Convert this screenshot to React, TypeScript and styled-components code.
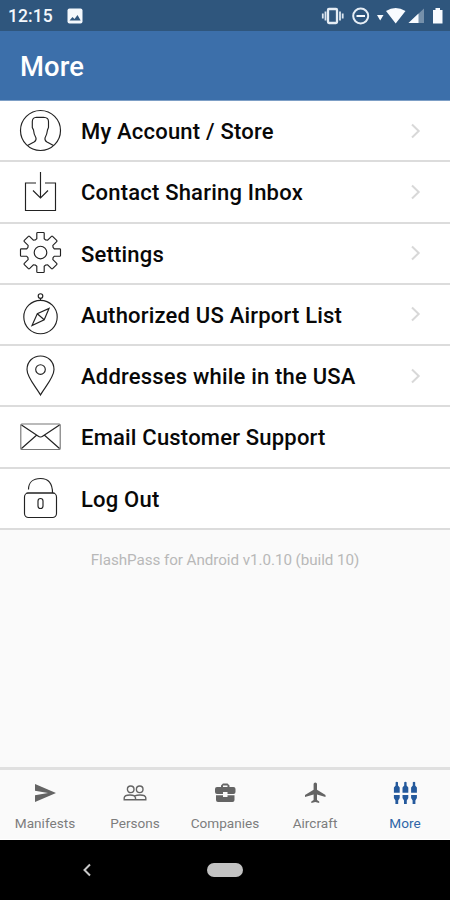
import React from "react";
import styled, { createGlobalStyle } from "styled-components";

const GlobalStyle = createGlobalStyle`
  body { margin: 0; background: #000; }
  * { box-sizing: border-box; }
`;

const Screen = styled.div`
  width: 450px;
  height: 900px;
  display: flex;
  flex-direction: column;
  overflow: hidden;
  background: #fafafa;
  font-family: Roboto, "Liberation Sans", sans-serif;
`;

const StatusBar = styled.header`
  height: 31px;
  flex: none;
  display: flex;
  align-items: center;
  padding: 1px 6px 0 8px;
  background: #2f567d;
  color: #f4f8fc;
`;

const Clock = styled.span`
  width: 59px;
  font-size: 17.5px;
  font-weight: 500;
  letter-spacing: 0.05px;
`;

const StatusIcons = styled.svg`
  margin-left: auto;
  display: block;
`;

const TitleBar = styled.div`
  height: 70px;
  flex: none;
  display: flex;
  align-items: center;
  padding: 2px 20px 0;
  background: #3c6faa;
  border-bottom: 1px solid #7d9fc6;
`;

const Title = styled.h1`
  margin: 0;
  color: #fff;
  font-size: 27.4px;
  font-weight: 500;
  letter-spacing: 0.1px;
`;

const List = styled.ul`
  margin: 0;
  padding: 0;
  list-style: none;
  background: #fff;
`;

const Row = styled.li`
  height: 61.25px;
  display: flex;
  align-items: center;
  padding: 0 28px 0 19px;
  border-bottom: 2px solid #dcdcdc;
`;

const RowIcon = styled.svg`
  width: 44px;
  height: 44px;
  flex: none;
  margin-right: 18px;
  fill: none;
  stroke: #222;
  stroke-width: 1.15;
`;

const RowLabel = styled.span`
  flex: 1;
  padding-top: 2px;
  color: #080808;
  font-size: 22px;
  font-weight: 500;
  letter-spacing: 0.2px;
  white-space: nowrap;
`;

const Chevron = styled.svg`
  width: 12px;
  height: 18px;
  fill: none;
  stroke: #d8d8d8;
  stroke-width: 2;
`;

const Version = styled.p`
  flex: 1;
  margin: 0;
  padding-top: 20.5px;
  color: #b8b8b8;
  font-size: 15.2px;
  line-height: 20px;
  letter-spacing: -0.05px;
  text-align: center;
`;

const TabBar = styled.nav`
  height: 73px;
  flex: none;
  display: grid;
  grid-template-columns: repeat(5, 1fr);
  border-top: 3px solid #e0e0e0;
  border-bottom: 1px solid #fff;
  background: #fafafa;
`;

const Tab = styled.div<{ $active?: boolean }>`
  display: flex;
  flex-direction: column;
  align-items: center;
  padding-top: 10px;
  color: ${(p) => (p.$active ? "#24599c" : "#646464")};
`;

const TabIcon = styled.svg`
  width: 26px;
  height: 26px;
  fill: currentColor;
`;

const TabLabel = styled.span<{ $active?: boolean }>`
  margin-top: 7.5px;
  color: ${(p) => (p.$active ? "#2f66a8" : "#7d7d7d")};
  font-size: 13.6px;
  line-height: 18px;
`;

const SystemNav = styled.footer`
  height: 60px;
  flex: none;
  display: flex;
  align-items: center;
  padding-left: 82px;
  background: #000;
`;

const BackIcon = styled.svg`
  width: 10px;
  height: 14px;
  fill: none;
  stroke: #c8c8c8;
  stroke-width: 2;
`;

const HomePill = styled.span`
  width: 36px;
  height: 14px;
  margin-left: 115px;
  border-radius: 7px;
  background: #c2c2c2;
`;

/* Eight straight-sided teeth around a round body. */
const gearPath = (() => {
  const point = (x: number, y: number, deg: number) => {
    const a = (deg * Math.PI) / 180;
    const px = 21.5 + x * Math.cos(a) - y * Math.sin(a);
    const py = 21.5 + x * Math.sin(a) + y * Math.cos(a);
    return `${px.toFixed(2)} ${py.toFixed(2)}`;
  };
  let d = "";
  for (let i = 0; i < 8; i++) {
    const a = i * 45;
    d += `${i ? "L" : "M"}${point(-5.1, -12.6, a)}L${point(-3.7, -13.8, a)}L${point(-3.7, -19.2, a)}Q${point(-3.7, -20, a)} ${point(-2.9, -20, a)}`;
    d += `L${point(2.9, -20, a)}Q${point(3.7, -20, a)} ${point(3.7, -19.2, a)}L${point(3.7, -13.8, a)}L${point(5.1, -12.6, a)}`;
  }
  return d + "Z";
})();

const rows = [
  {
    label: "My Account / Store",
    arrow: true,
    icon: (
      <>
        <circle cx="21.5" cy="21.5" r="20" />
        <path d="M8.500 36.500L15 33Q17.500 31.500 17 29Q14.800 25.500 14.500 21L13.300 18.500V12.500Q13.500 8.500 17.500 8.300H24.500Q29.500 8.500 29.500 12.500V18.500L28.500 21Q28 25.500 26 29Q25.500 31.500 28 33L34.500 36.500" />
      </>
    ),
  },
  {
    label: "Contact Sharing Inbox",
    arrow: true,
    icon: <path d="M17 13H6.500V40.500H36.500V13H26M21.500 2V27.500M14 20.500L21.500 28L29 20.500" />,
  },
  {
    label: "Settings",
    arrow: true,
    icon: (
      <>
        <path d={gearPath} />
        <circle cx="21.500" cy="21.500" r="6.300" />
      </>
    ),
  },
  {
    label: "Authorized US Airport List",
    arrow: true,
    icon: (
      <>
        <circle cx="21.500" cy="25" r="16.700" />
        <circle cx="21.500" cy="4" r="2.300" />
        <path d="M21.500 6.300V8.300M30 16.500L25.200 27.800L13 33.500L18.300 21.800ZM18.300 21.800L25.200 27.800" />
      </>
    ),
  },
  {
    label: "Addresses while in the USA",
    arrow: true,
    icon: (
      <>
        <path d="M21.500 41C17 33 8 23.500 8 15.500C8 7.500 14 2 21.500 2S35 7.500 35 15.500C35 23.500 26 33 21.500 41Z" />
        <circle cx="21.500" cy="15.500" r="4.800" />
      </>
    ),
  },
  {
    label: "Email Customer Support",
    arrow: false,
    icon: (
      <>
        <rect x="1.800" y="9" width="39.400" height="25.500" rx="1" stroke="#777" />
        <path d="M2.500 10L19 21Q21.500 23 24 21L40.500 10M2.500 33.500L17.500 20.300M40.500 33.500L25.500 20.300" />
      </>
    ),
  },
  {
    label: "Log Out",
    arrow: false,
    icon: (
      <>
        <rect x="5.500" y="17" width="32" height="24.500" rx="4" />
        <path d="M9.500 13.500C9.500 6.500 14 2.500 21.500 2.500S33.500 7.500 33.500 17M7.500 17H35.500" />
        <rect x="19" y="22.500" width="5" height="10" rx="2.500" />
      </>
    ),
  },
];

const tabs = [
  { label: "Manifests", icon: <path d="M3 4L24 13L3 22V15.200L16 13L3 10.800Z" /> },
  {
    label: "Persons",
    icon: (
      <g fill="none" stroke="currentColor" strokeWidth="1.400">
        <circle cx="8.700" cy="9.300" r="3.300" />
        <circle cx="17.700" cy="9.300" r="3.300" />
        <path d="M2.200 19.800V17.800Q2.500 15 8 15Q13 15 13.500 17.800V19.800ZM12.500 15.800Q15 15 18 15Q23.500 15 23.800 17.800V19.800H13.500" />
      </g>
    ),
  },
  {
    label: "Companies",
    icon: (
      <path
        fillRule="evenodd"
        d="M9 7V5.500L11 3.500H15.500L17.500 5.500V7H21.500Q23.500 7 23.500 9V12Q23.500 14 21.500 14H15.500V12H11V14H5Q3 14 3 12V9Q3 7 5 7ZM11 7H15.500V5.500H11ZM4 15.300H11V17H15.500V15.300H22.500V20Q22.500 22 20.500 22H6Q4 22 4 20Z"
      />
    ),
  },
  {
    label: "Aircraft",
    icon: <path d="M23.500 17V15L15 9.700V4Q15 2.500 13.300 2.500T11.600 4V9.700L3 15V17L11.600 14.400V20L9.300 21.600V23L13.300 22L17.200 23V21.600L15 20V14.400Z" />,
  },
  {
    label: "More",
    active: true,
    icon: (
      <>
        {[4.8, 13.4, 22].map((x) => (
          <path
            key={x}
            d={`M${x - 1.2} 2.300Q${x} 1.300 ${x + 1.2} 2.300V5.500L${x + 2.900} 7.500V12.700H${x - 2.900}V7.500L${x - 1.2} 5.500ZM${x - 2.900} 15H${x + 2.900}V18L${x + 1.400} 20.500V24H${x - 1.400}V20.500L${x - 2.900} 18Z`}
          />
        ))}
      </>
    ),
  },
];

export default function App() {
  return (
    <Screen>
      <GlobalStyle />
      <StatusBar>
        <Clock>12:15</Clock>
        <svg width="16" height="16" viewBox="0 0 16 16">
          <rect x=".5" y=".5" width="15" height="15" rx="2" fill="#f4f8fc" />
          <path d="M2.500 12.500L5.500 9L7.500 11L10.500 7L13.700 12.500Z" fill="#2f567d" />
        </svg>
        <StatusIcons width="124" height="20" viewBox="320 5.5 124 20" fill="#f8fbff">
          <rect x="328" y="8.500" width="9" height="14" rx="1" fill="none" stroke="#e5edf5" strokeWidth="2.300" />
          <path d="M325.500 11V20M340 11V20M322.800 13V18M342.700 13V18" stroke="#d9e4ef" strokeWidth="1.800" />
          <circle cx="360.700" cy="15.500" r="7.500" fill="none" stroke="#e5edf5" strokeWidth="2" />
          <path d="M356.500 15.500H365" stroke="#f8fbff" strokeWidth="2" />
          <path d="M377 14.500H383.500L380.200 20ZM386 10.500Q395.500 4.500 405.500 10.500L395.700 23Z" />
          <path d="M424 8V22.500H408.500Z" opacity=".35" />
          <path d="M418.500 13V22.500H408.500Z" />
          <path d="M433 9.500H435.500V7.500H440V9.500H442.500V23H433Z" />
        </StatusIcons>
      </StatusBar>
      <TitleBar>
        <Title>More</Title>
      </TitleBar>
      <List>
        {rows.map((row) => (
          <Row key={row.label}>
            <RowIcon viewBox="0 0 44 44">{row.icon}</RowIcon>
            <RowLabel>{row.label}</RowLabel>
            {row.arrow && (
              <Chevron viewBox="0 0 12 18">
                <path d="M2 2.500L8.700 9L2 15.500" />
              </Chevron>
            )}
          </Row>
        ))}
      </List>
      <Version>FlashPass for Android v1.0.10 (build 10)</Version>
      <TabBar>
        {tabs.map((tab) => (
          <Tab key={tab.label} $active={tab.active}>
            <TabIcon viewBox="0 0 26 26">{tab.icon}</TabIcon>
            <TabLabel $active={tab.active}>{tab.label}</TabLabel>
          </Tab>
        ))}
      </TabBar>
      <SystemNav>
        <BackIcon viewBox="0 0 10 14">
          <path d="M8 1.500L2.500 7L8 12.500" />
        </BackIcon>
        <HomePill />
      </SystemNav>
    </Screen>
  );
}
